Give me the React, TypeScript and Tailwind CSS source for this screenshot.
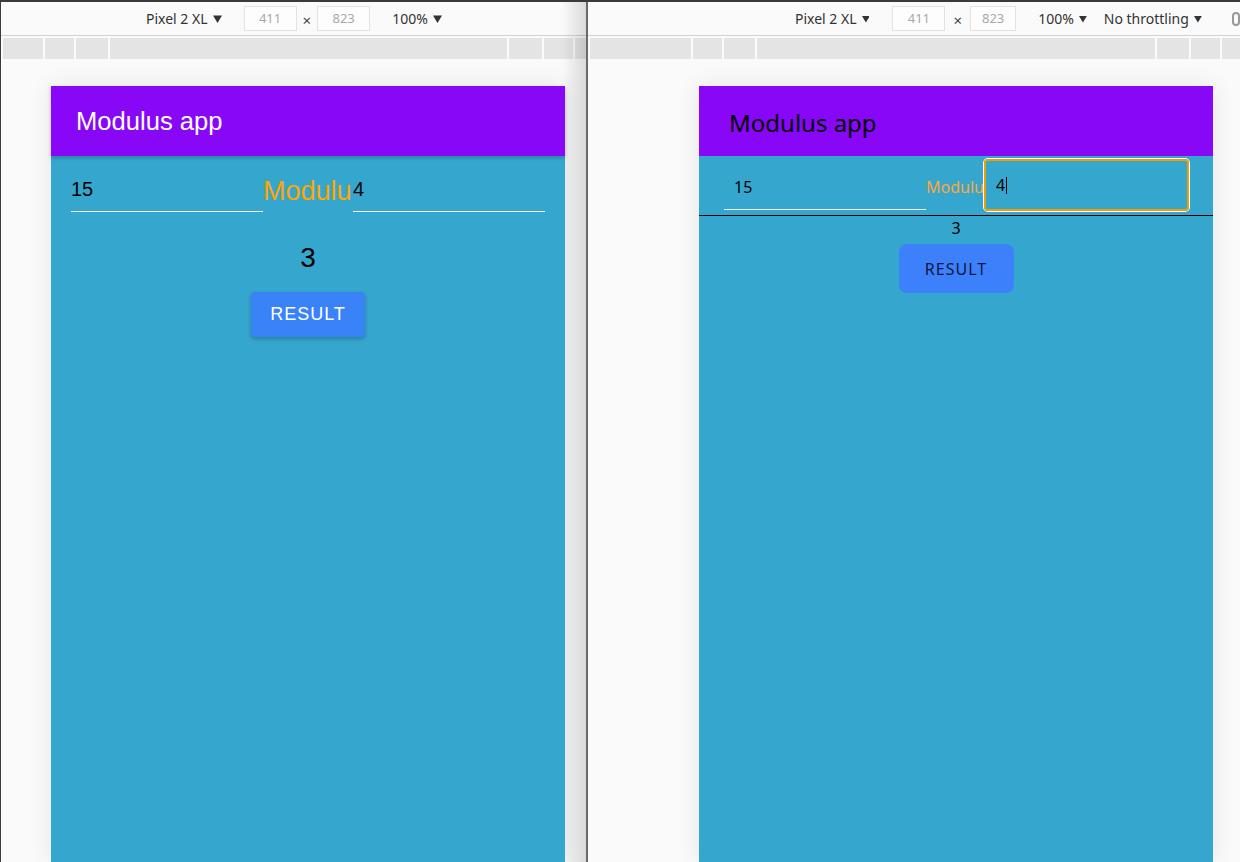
import React from "react"

function Caret () {
    return (
        <svg width="9" height="8" viewBox="0 0 9 8" className="ml-[5px]">
            <path d="M0 0.5h9L4.5 8z" fill="#333"/>
        </svg>
    )
}

function SizeBox ({value}: {value: string}) {
    return (
        <div className="w-[53px] h-[25px] border border-[#e2e2e2] bg-[#fdfdfd] flex items-center justify-center text-[13px] text-[#a8a8a8]">
            {value}
        </div>
    )
}

function Toolbar ({left, throttling}: {left: number, throttling?: boolean}) {
    return (
        <div className="h-[34px] flex items-center border-b border-[#d2d2d2] bg-[#fafafa] text-[14px] text-[#333] whitespace-nowrap" style={{paddingLeft: left}}>
            <span>Pixel 2 XL</span>
            <Caret/>
            <div className={throttling ? "ml-[23px]" : "ml-[22px]"}><SizeBox value="411"/></div>
            <span className={throttling ? "mx-[8px] text-[15px] text-[#444] mt-[3px]" : "mx-[6px] text-[15px] text-[#444] mt-[3px]"}>×</span>
            <SizeBox value="823"/>
            <span className="ml-[22px]">100%</span>
            <Caret/>
            {throttling && (
                <>
                    <span className="ml-[17px]">No throttling</span>
                    <Caret/>
                    <span className="ml-[30px] w-[9px] h-[14px] rounded-full border-2 border-[#999]"></span>
                </>
            )}
        </div>
    )
}

function Ruler ({segments, start}: {segments: number[], start: number}) {
    return (
        <div className="mt-[2px] h-[21px] flex gap-[2px] overflow-hidden" style={{paddingLeft: start}}>
            {segments.map((w, i) => (
                <div key={i} className="h-full shrink-0 bg-[#e4e4e4]" style={{width: w}}></div>
            ))}
        </div>
    )
}

// left preview: plain Arial, material-like
function LeftPhone () {
    return (
        <div className="ml-[50px] mt-[27px] w-[514px] flex-1 flex flex-col bg-[#35a7cf] shadow-[0_0_22px_rgba(0,0,0,0.09)] font-['Liberation_Sans',Arial,sans-serif]">
            <div className="relative z-10 h-[70px] shrink-0 flex items-center pl-[25px] pt-[2px] bg-[#8707f6] shadow-[0_2px_4px_rgba(0,0,0,0.22)]">
                <h1 className="text-[25.6px] text-white leading-none">Modulus app</h1>
            </div>
            <div className="flex flex-row px-[20px] mt-[14px]">
                <input readOnly defaultValue="15" className="w-[192px] h-[42px] pb-[2px] border-b border-white bg-transparent text-[20px] text-black outline-none"/>
                <div className="w-[90px] h-[42px] flex items-center">
                    <span className="text-[27px] text-[#ffa500] whitespace-nowrap">Modulu</span>
                </div>
                <input readOnly defaultValue="4" className="w-[192px] h-[42px] pb-[2px] border-b border-white bg-transparent text-[20px] text-black outline-none"/>
            </div>
            <div className="flex flex-col items-center">
                <p className="mt-[30px] text-[28px] text-black leading-[32px]">3</p>
                <button className="mt-[18px] w-[114px] h-[45px] rounded-[4px] bg-[#3a82f7] text-white text-[18px] tracking-[1px] shadow-[0_2px_4px_rgba(0,0,0,0.25)]">RESULT</button>
            </div>
        </div>
    )
}

// right preview: unstyled inputs, Segoe-ish font
function RightPhone () {
    return (
        <div className="ml-[111px] mt-[27px] w-[514px] flex-1 flex flex-col bg-[#35a7cf] shadow-[0_0_22px_rgba(0,0,0,0.09)] font-['Noto_Sans','Open_Sans',sans-serif]">
            <div className="h-[70px] shrink-0 flex items-center pl-[30px] pt-[4px] bg-[#8707f6]">
                <h1 className="text-[24px] text-black leading-none">Modulus app</h1>
            </div>
            <div className="h-[60px] flex flex-row items-start pl-[25px] border-b border-black">
                <input readOnly defaultValue="15" className="mt-[10px] w-[202px] h-[44px] pl-[10px] pb-[2px] border-b border-white bg-transparent text-[16px] text-black outline-none"/>
                <div className="mt-[3px] w-[58px] h-[52px] flex items-center pt-[3px]">
                    <span className="text-[16px] text-[#ffa538] whitespace-nowrap">Modulu</span>
                </div>
                <div className="mt-[3px] w-[205px] h-[52px] rounded-[4px] border-2 border-[#eda000] ring-1 ring-white flex items-center pl-[10px] text-[16px] text-black">
                    <span>4</span>
                    <span className="ml-[1px] w-px h-[17px] bg-black"></span>
                </div>
            </div>
            <div className="flex flex-col items-center">
                <p className="text-[16px] text-black leading-[24px]">3</p>
                <button className="mt-[4px] w-[115px] h-[49px] rounded-[8px] bg-[#3d80fb] text-[#0d1740] text-[16px] tracking-[1px]">RESULT</button>
            </div>
        </div>
    )
}

export default function App () {
    return (
        <div className="w-[1240px] h-[862px] overflow-hidden flex flex-row bg-[#3a3a3a] pt-[2px] pl-px font-['Noto_Sans','Open_Sans',sans-serif]">
            {/* left devtools pane */}
            <div className="relative w-[585px] h-full shrink-0 flex flex-col bg-[#fafafa] overflow-hidden">
                <Toolbar left={145}/>
                <Ruler start={2} segments={[40, 29, 32, 397, 33, 29, 20]}/>
                <LeftPhone/>
                <div className="absolute top-0 right-0 bottom-0 w-[24px] bg-linear-to-r from-transparent to-[rgba(0,0,0,0.13)]"></div>
            </div>
            <div className="w-[2px] h-full shrink-0 bg-[#6a6a6a]"></div>
            {/* right devtools pane */}
            <div className="relative w-[652px] h-full shrink-0 flex flex-col bg-[#fafafa] overflow-hidden">
                <Toolbar left={207} throttling/>
                <Ruler start={2} segments={[101, 29, 31, 398, 32, 29, 30]}/>
                <RightPhone/>
            </div>
        </div>
    )
}
